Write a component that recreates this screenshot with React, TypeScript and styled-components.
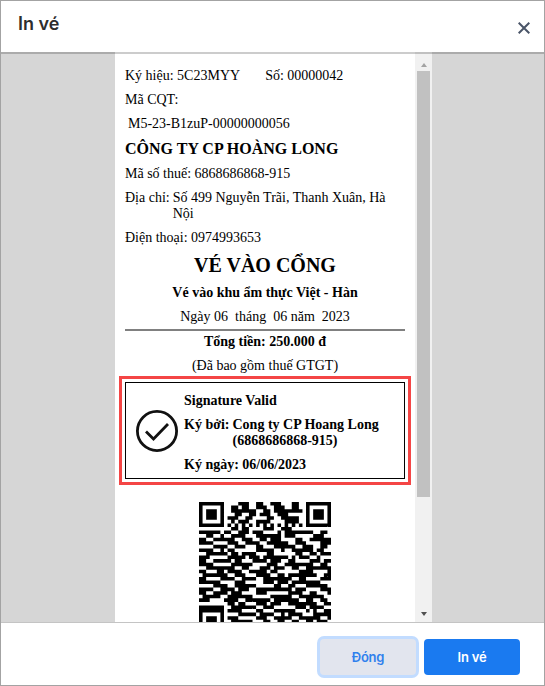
import React from "react";
import styled, { createGlobalStyle } from "styled-components";

const Global = createGlobalStyle`
  html, body { margin: 0; padding: 0; background: #fff; }
  * { box-sizing: border-box; }
`;

const Window = styled.div`
  width: 545px;
  height: 686px;
  border: 1px solid #a3a3a3;
  display: flex;
  flex-direction: column;
  background: #fff;
  overflow: hidden;
`;

const Header = styled.header`
  position: relative;
  z-index: 1;
  flex: 0 0 51px;
  display: flex;
  justify-content: space-between;
  padding: 11px 14px 0 17px;
  background: #fff;
  box-shadow: 0 2px 0 rgba(0, 0, 0, 0.2);
`;

const Title = styled.h1`
  margin: 0;
  font: 600 18px/24px Inter, "Liberation Sans", sans-serif;
  color: #2d2d2d;
`;

const Close = styled.button`
  width: 12px;
  height: 12px;
  margin-top: 10px;
  padding: 0;
  border: 0;
  background: none;
  color: #4a5568;
  display: flex;
`;

const Body = styled.main`
  flex: 1;
  min-height: 0;
  display: flex;
  justify-content: center;
  padding-left: 2px;
  background: #d6d6d6;
  overflow: hidden;
`;

const Paper = styled.div`
  width: 300px;
  padding: 16px 10px 0;
  background: #fff;
  color: #000;
  font: 14px/16px "Liberation Serif", "Times New Roman", serif;
  overflow: hidden;
`;

const Line = styled.p<{ $center?: boolean; $bold?: boolean; $size?: number; $lh?: number; $indent?: number }>`
  margin: 0 0 8px;
  padding-left: ${(p) => p.$indent ?? 0}px;
  text-align: ${(p) => (p.$center ? "center" : "left")};
  font-weight: ${(p) => (p.$bold ? 700 : "inherit")};
  font-size: ${(p) => p.$size ?? 14}px;
  line-height: ${(p) => p.$lh ?? 16}px;
  white-space: pre-wrap;
`;

const Pair = styled.div`
  display: flex;
  gap: 25px;
  margin: 0 0 8px;
`;

const Hanging = styled.div`
  display: flex;
  gap: 3px;
  margin: 0 0 8px;
`;

const Label = styled.span`
  flex: none;
`;

const Rule = styled.hr`
  margin: -4px 0 3px;
  height: 2px;
  border: 0;
  background: #808080;
`;

const SignatureBox = styled.section`
  margin-top: 8px;
  height: 97px;
  border: 1px solid #000;
  outline: 3px solid #f44545;
  outline-offset: 3px;
  display: flex;
  align-items: center;
  gap: 5px;
  padding-left: 9px;
`;

const CheckIcon = styled.svg`
  flex: none;
`;

const SignatureText = styled.div`
  font-weight: 700;
  padding-top: 5px;
  & > *:last-child { margin-bottom: 0; }
`;

const QrWrap = styled.div`
  display: flex;
  justify-content: center;
  margin-top: 23px;
`;

const Scrollbar = styled.div`
  width: 17px;
  background: #f1f1f1;
  display: flex;
  flex-direction: column;
`;

const ArrowBox = styled.div<{ $h: number }>`
  flex: 0 0 ${(p) => p.$h}px;
  display: flex;
  align-items: center;
  justify-content: center;
`;

const ArrowUp = styled.i`
  margin-top: 7px;
  border-left: 3.5px solid transparent;
  border-right: 3.5px solid transparent;
  border-bottom: 4px solid #a3a3a3;
`;

const ArrowDown = styled.i`
  border-left: 3.5px solid transparent;
  border-right: 3.5px solid transparent;
  border-top: 4px solid #505050;
`;

const Thumb = styled.div`
  flex: 0 0 426px;
  margin: 0 2px;
  background: #c1c1c1;
`;

const Spacer = styled.div`
  flex: 1;
`;

const Footer = styled.footer`
  flex: 0 0 63px;
  display: flex;
  justify-content: flex-end;
  align-items: flex-start;
  gap: 8px;
  padding: 16px 24px 0 0;
  border-top: 1px solid #c4c4c4;
  background: #fff;
`;

const Button = styled.button<{ $primary?: boolean }>`
  width: 96px;
  height: 36px;
  border: 0;
  border-radius: 4px;
  font: 600 13px Inter, "Liberation Sans", sans-serif;
  letter-spacing: -0.2px;
  color: ${(p) => (p.$primary ? "#fff" : "#2f80ed")};
  background: ${(p) => (p.$primary ? "#1a7af0" : "#e2e5ee")};
  box-shadow: ${(p) => (p.$primary ? "none" : "0 0 0 3px #c2dcff")};
`;

const qrRows = [
  "1111111000011100110011100011001111111",
  "1000001001101100111001110011001000001",
  "1011101001111111001101111111101011101",
  "1011101000110011011100111000001011101",
  "1011101011100110000110011111001011101",
  "1000001001011100111100001111001000001",
  "1111111010101010101010101010101111111",
  "0000000001101100001110011100000000000",
  "1111110110011101110000101111111100110",
  "0011001001111000111111101110000011100",
  "1100111111001110011011100001100111111",
  "1111000011100111100111111001110000111",
  "0000111100111000110001111110011100110",
  "1111001011000000111110010011111101100",
  "0011111101101111000110000001100110111",
  "1110000011111011101111111010111001000",
  "1100111110110001111011100110000111011",
  "1111000001111110000111001111111100110",
  "0011111111001100011101110011001111111",
  "1100011011110011111011000000111100001",
  "0111111100111000111100110111111110011",
  "1100001111001111001111111100110000111",
  "1111110000111000001110111011111111000",
  "0000111100111111000001100110001111110",
  "1111001111011100111111111101110000111",
  "1100111101110000111000000111100110001",
  "0111110011111110000011111100111111100",
  "1110000111100111111101111111001100110",
  "0000000011011000111011100111111110011",
  "1111111001111111001110000001110111100",
  "1000001011110000110001111110001010011",
  "1011101000011111011110010111100011111",
  "1011101011100000111001111100111111001",
  "1011101001111110001100110011001101110",
  "1011101011011011110111001110110011011",
  "1000001001110100111011100101011100111",
  "1111111011001110010110011011101101100",
];

const N = 37;
const isFinder = (x: number, y: number, ox: number, oy: number) => {
  const dx = x - ox;
  const dy = y - oy;
  if (dx < 0 || dy < 0 || dx > 6 || dy > 6) return null;
  const edge = dx === 0 || dy === 0 || dx === 6 || dy === 6;
  const core = dx >= 2 && dx <= 4 && dy >= 2 && dy <= 4;
  return edge || core;
};

const qrPath = () => {
  let d = "";
  for (let y = 0; y < N; y++) {
    for (let x = 0; x < N; x++) {
      const f = isFinder(x, y, 0, 0) ?? isFinder(x, y, 30, 0) ?? isFinder(x, y, 0, 30);
      const on = f ?? qrRows[y][x] === "1";
      if (on) d += `M${x} ${y}h1v1h-1z`;
    }
  }
  return d;
};

const Qr = () => (
  <svg width="132" height="132" viewBox="0 0 37 37" aria-label="QR">
    <path d={qrPath()} fill="#000" />
  </svg>
);

export default function App() {
  return (
    <>
      <Global />
      <Window>
        <Header>
          <Title>In vé</Title>
          <Close aria-label="Đóng">
            <svg width="12" height="12" viewBox="0 0 12 12" fill="none" stroke="currentColor" strokeWidth="2">
              <path d="M.7.7l10.6 10.6M11.3.7.7 11.3" />
            </svg>
          </Close>
        </Header>
        <Body>
          <Paper>
            <Pair>
              <span>Ký hiệu: 5C23MYY</span>
              <span>Số: 00000042</span>
            </Pair>
            <Line>Mã CQT:</Line>
            <Line $indent={3}>M5-23-B1zuP-00000000056</Line>
            <Line $bold $size={16} $lh={18}>CÔNG TY CP HOÀNG LONG</Line>
            <Line>Mã số thuế: 6868686868-915</Line>
            <Hanging>
              <Label>Địa chỉ:</Label>
              <span>Số 499 Nguyễn Trãi, Thanh Xuân, Hà Nội</span>
            </Hanging>
            <Line>Điện thoại: 0974993653</Line>
            <Line $center $bold $size={20} $lh={23}>VÉ VÀO CỔNG</Line>
            <Line $center $bold>Vé vào khu ẩm thực Việt - Hàn</Line>
            <Line $center>{"Ngày 06  tháng  06 năm  2023"}</Line>
            <Rule />
            <Line $center $bold>Tổng tiền: 250.000 đ</Line>
            <Line $center>(Đã bao gồm thuế GTGT)</Line>
            <SignatureBox>
              <CheckIcon width="44" height="44" viewBox="0 0 44 44" fill="none" stroke="#111" strokeWidth="2.8">
                <circle cx="22" cy="22" r="19.6" />
                <path d="M11 22.5l7.5 7.5L33 15" strokeWidth="2.8" />
              </CheckIcon>
              <SignatureText>
                <Line>Signature Valid</Line>
                <Hanging>
                  <Label>Ký bởi:</Label>
                  <span>Cong ty CP Hoang Long (6868686868-915)</span>
                </Hanging>
                <Line>Ký ngày: 06/06/2023</Line>
              </SignatureText>
            </SignatureBox>
            <QrWrap>
              <Qr />
            </QrWrap>
          </Paper>
          <Scrollbar>
            <ArrowBox $h={19}>
              <ArrowUp />
            </ArrowBox>
            <Thumb />
            <Spacer />
            <ArrowBox $h={17}>
              <ArrowDown />
            </ArrowBox>
          </Scrollbar>
        </Body>
        <Footer>
          <Button>Đóng</Button>
          <Button $primary>In vé</Button>
        </Footer>
      </Window>
    </>
  );
}
